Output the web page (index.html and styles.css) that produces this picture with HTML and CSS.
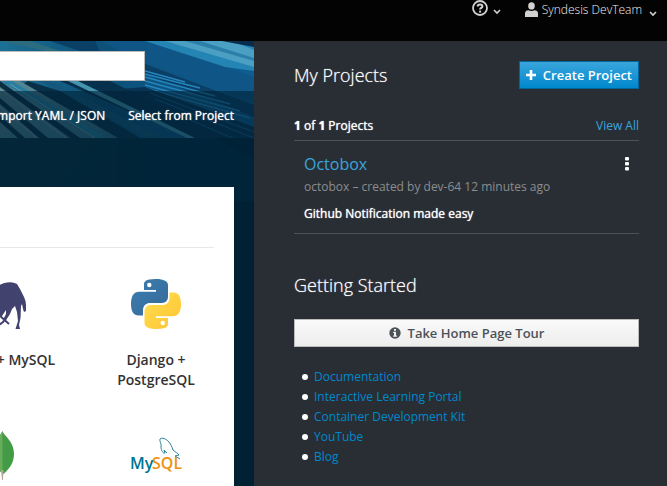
FILE: index.html
```html
<!DOCTYPE html>
<html lang="en">
<head>
<meta charset="utf-8">
<title>Catalog</title>
<link rel="stylesheet" href="styles.css">
</head>
<body>
<header class="topbar">
  <button class="menu help" type="button" aria-label="Help">
    <svg width="16" height="16" viewBox="0 0 16 16"><circle cx="8" cy="8" r="7" fill="none" stroke="currentColor" stroke-width="1.8"/><path d="M5.7 6.4C5.7 3.7 10.4 3.7 10.4 6.4C10.4 8 8.1 7.9 8.1 9.5" fill="none" stroke="currentColor" stroke-width="2"/><rect x="7.1" y="10.6" width="2" height="2" fill="currentColor"/></svg>
    <svg class="caret" width="8" height="8" viewBox="0 0 8 8"><path d="M1 3L4 6L7 3" fill="none" stroke="currentColor" stroke-width="1.6"/></svg>
  </button>
  <button class="menu user" type="button">
    <svg width="13" height="16" viewBox="0 0 13 16"><ellipse cx="6.500" cy="3.900" rx="3.300" ry="3.700" fill="currentColor"/><path d="M0 15V11.500Q0 8.600 3.400 8.200Q6.500 9.800 9.600 8.200Q13 8.600 13 11.500V15Z" fill="currentColor"/></svg>
    <span class="user-name">Syndesis DevTeam</span>
    <svg class="caret" width="8" height="8" viewBox="0 0 8 8"><path d="M1 3L4 6L7 3" fill="none" stroke="currentColor" stroke-width="1.6"/></svg>
  </button>
</header>
<div class="page">
  <main class="catalog">
    <svg class="backdrop" width="254" height="160" viewBox="0 0 254 160" preserveAspectRatio="none" aria-hidden="true">
      <defs>
        <linearGradient id="sky" x1="0" y1="0" x2="1" y2="0"><stop offset="0" stop-color="#1c7096"/><stop offset=".4" stop-color="#0d5078"/><stop offset="1" stop-color="#0e5d92"/></linearGradient>
        <linearGradient id="rail" x1="0" y1="0" x2="1" y2="1"><stop offset="0" stop-color="#5a8893"/><stop offset="1" stop-color="#256685"/></linearGradient>
      </defs>
      <rect width="254" height="160" fill="url(#sky)"/>
      <path d="M0 0H30L60 10H45Z" fill="#2c6c80"/>
      <path d="M50 0H95L100 10H80Z" fill="#0a3f66"/>
      <path d="M100 0H150L254 36V62L145 22Z" fill="#0f5585"/>
      <path d="M145 0H254V30L225 26Z" fill="#2484b4"/>
      <path d="M165 0H232L254 9V26Z" fill="#4a9fc2"/>
      <path d="M185 0H200L254 17V20Z" fill="#2c7fa9"/>
      <path d="M222 0H254V6Z" fill="#082c4c"/>
      <path d="M145 23L254 64V76L145 33Z" fill="#0b3f66"/>
      <g stroke="#2486bd" stroke-width="1.500"><path d="M145 30L185 41M145 33L200 47M145 36L215 55M145 40L230 63M145 44L240 70M145 47L250 77"/></g>
      <path d="M145 46L254 86V118L120 48Z" fill="#083354"/>
      <g stroke="#17608f"><path d="M150 52L254 91M155 58L254 97M150 62L254 106M140 62L240 112"/></g>
      <path d="M60 40H110L225 97L190 97Z" fill="#06304c"/>
      <path d="M78 40L195 97H187L68 40Z" fill="#4494ae"/>
      <path d="M50 40L165 97H145L40 40Z" fill="#15587c"/>
      <path d="M28 40L60 50L140 97H110L20 45Z" fill="#093047"/>
      <path d="M0 40H20L118 97V160H0Z" fill="url(#rail)"/>
      <path d="M0 40L12 40L107 97H94Z" fill="#267fa3"/>
      <g fill="#092e42"><path d="M0 40L80 97H70L0 46Z"/><path d="M0 57L48 97H39L0 63Z"/><path d="M0 75L25 97H18L0 81Z"/></g>
      <g stroke="#79939a"><path d="M0 48L66 97M0 66L37 97M10 43L95 97"/></g>
    </svg>
    <section class="search">
      <input class="search-box" type="text" aria-label="Search catalog">
    </section>
    <nav class="actions">
      <a href="#">Import YAML / JSON</a>
      <a href="#">Select from Project</a>
    </nav>
    <section class="shade">
      <div class="card">
        <div class="card-head"></div>
        <div class="tiles">
          <a class="tile" href="#">
            <svg class="logo" width="52" height="50" viewBox="0 0 52 50"><path fill="#42426f" d="M0 14L5 17L10 19L16 15L22 8Q28 4 33 3.500Q39 2.500 43 5L46 10L50 18Q52 22 52 26V32L50 33L49 30L48 25L47 27L46.500 39L45 46L46 50H41.500L44 42L43 33L41 27L38 30L36 35L34 38L31 43L29 41L32 35V31L28 37L26 38L23 34L22 48H18L20 33Q11 32 7 22L0 18Z"/><path d="M25 36L35 45M34 35L29 43L25 46" fill="none" stroke="#42426f" stroke-width="2"/></svg>
            <span>Dancer + MySQL</span>
          </a>
          <a class="tile" href="#">
            <svg class="logo" width="50" height="50" viewBox="0 0 50 50"><defs><linearGradient id="pyb" x1="0" y1="0" x2="1" y2="1"><stop offset="0" stop-color="#3b7db0"/><stop offset="1" stop-color="#366a98"/></linearGradient><linearGradient id="pyy" x1="0" y1="0" x2="1" y2="1"><stop offset="0" stop-color="#ffe052"/><stop offset="1" stop-color="#ffc331"/></linearGradient></defs><path fill="url(#pyb)" d="M24.800 0C14 0 13 3 13 5.500V11H25V12.800H8C3 12.800 0 17 0 25C0 33 3 36.500 7.500 36.500H12V31C12 26.500 15.500 24 19 24H31C34.500 24 37 21 37 18V6C37 2.500 33 0 24.800 0ZM18.300 3.800A2.200 2.200 0 1 1 18.300 8.200A2.200 2.200 0 0 1 18.300 3.800Z"/><path fill="url(#pyy)" d="M25.200 50C36 50 37 47 37 44.500V39H25V37.200H42C47 37.200 50 33 50 25C50 17 47 13.500 42.500 13.500H38.500V19C38.500 23.500 35 26 31.500 26H19.500C16 26 13.500 29 13.500 32V44C13.500 47.500 17 50 25.200 50ZM31.700 46.200A2.200 2.200 0 1 1 31.700 41.800A2.200 2.200 0 0 1 31.700 46.200Z"/></svg>
            <span>Django + PostgreSQL</span>
          </a>
          <a class="tile" href="#" aria-label="MongoDB">
            <svg class="logo" width="50" height="50" viewBox="0 0 50 50"><path d="M27.500 1C29 6 39 11 39 24C39 34 33 40 28.500 44C20 38 15 32 16 22C17 12 25 7 27.500 1Z" fill="#449b45"/><path d="M27.500 1C25 7 17 12 16 22C15 32 20 38 27.500 43Z" fill="#67ad5b"/><path d="M26 40H28.500L28 50H27Z" fill="#b5aa96"/></svg>
          </a>
          <a class="tile" href="#">
            <svg class="logo" width="52" height="50" viewBox="0 0 52 50" aria-label="MySQL"><g font-family="Open Sans, sans-serif" font-size="16" font-weight="600"><text x="0" y="39" fill="#00758f">My</text><text x="22" y="39" fill="#f29111">SQL</text></g><path d="M30 9C32 7 36 9 38 11C41 14 42 17 43 20C45 22 48 23 49 25L45 26L50 29M30 9C29 11 32 14 31 17C31 20 33 24 35 23L34 20L37 23" fill="none" stroke="#2d8599"/></svg>
          </a>
        </div>
      </div>
    </section>
  </main>
  <aside class="side">
    <div class="row">
      <h2>My Projects</h2>
      <button class="create" type="button"><svg width="10" height="10" viewBox="0 0 10 10"><path d="M5 0V10M0 5H10" stroke="currentColor" stroke-width="2.600"/></svg>Create Project</button>
    </div>
    <div class="row summary">
      <span class="count"><b>1</b> of <b>1</b> Projects</span>
      <a class="view-all" href="#">View All</a>
    </div>
    <article class="project">
      <div class="row">
        <h3><a href="#">Octobox</a></h3>
        <button class="kebab" type="button" aria-label="Project actions"><svg width="4" height="14" viewBox="0 0 4 14" fill="currentColor"><rect width="4" height="3.600" rx="1"/><rect y="5" width="4" height="3.600" rx="1"/><rect y="10" width="4" height="3.600" rx="1"/></svg></button>
      </div>
      <p class="meta">octobox – created by dev-64 12 minutes ago</p>
      <p class="about">Github Notification made easy</p>
    </article>
    <h2 class="started">Getting Started</h2>
    <button class="tour" type="button"><svg width="12" height="12" viewBox="0 0 12 12"><circle cx="6" cy="6" r="5.700" fill="currentColor"/><path d="M5 2H7V3.700H5ZM4.200 4.800H7V8.500H7.900V9.800H4.200V8.500H5V6H4.200Z" fill="#f4f4f4"/></svg>Take Home Page Tour</button>
    <ul class="links">
      <li><a href="#">Documentation</a></li>
      <li><a href="#">Interactive Learning Portal</a></li>
      <li><a href="#">Container Development Kit</a></li>
      <li><a href="#">YouTube</a></li>
      <li><a href="#">Blog</a></li>
    </ul>
  </aside>
</div>
</body>
</html>
```
FILE: styles.css
```css
* { box-sizing: border-box; }
html, body { height: 100%; }
body {
  margin: 0;
  display: flex;
  flex-direction: column;
  overflow: hidden;
  background: #292e34;
  color: #fff;
  font: 12px/20px "Open Sans", sans-serif;
}
a { color: inherit; text-decoration: none; }
button { font: inherit; color: inherit; cursor: pointer; }
svg { flex: none; }
h2, h3, p, ul { margin: 0; font-weight: 400; }

.topbar {
  flex: none;
  display: flex;
  justify-content: flex-end;
  align-items: flex-start;
  gap: 24px;
  padding: 0 10px;
  height: 41px;
  background: #030303;
}
.menu {
  display: flex;
  align-items: center;
  padding: 0;
  border: 0;
  background: none;
  color: #d1d1d1;
}
.menu .caret { margin-top: 6px; }
.help { gap: 5px; }
.user-name { margin: 0 7px 0 4px; font-weight: 300; color: #f0f0f0; }

.page {
  flex: 1;
  display: grid;
  grid-template-columns: minmax(0, 1fr) 413px;
}
.catalog {
  position: relative;
  display: flex;
  flex-direction: column;
  overflow: hidden;
  background: #002235;
}
.backdrop { position: absolute; top: 0; left: 0; width: 100%; }
.search, .actions, .shade { position: relative; }
.search {
  display: flex;
  justify-content: flex-end;
  padding: 10px 109px 10px 0;
}
.search-box {
  flex: none;
  width: 400px;
  height: 30px;
  border: 1px solid #bbb;
  background: #fff;
  font: inherit;
}
.actions {
  display: flex;
  justify-content: flex-end;
  gap: 23px;
  padding: 15px 20px 12px;
  background: rgba(0, 34, 53, .6);
  white-space: nowrap;
}
.actions, .count, .about {
  font-weight: 500;
  text-shadow: 0 0 1px #fff;
}
.shade {
  flex: 1;
  display: flex;
  justify-content: flex-end;
  padding: 49px 20px 0 0;
  background: rgba(0, 34, 53, .95);
}
.card {
  flex: none;
  width: 312px;
  background: #fff;
  color: #333;
}
.card-head {
  height: 61px;
  margin: 0 20px;
  border-bottom: 1px solid #e8e8e8;
}
.tiles {
  display: grid;
  grid-template-columns: 156px 156px;
  row-gap: 40px;
  padding-top: 31px;
}
.tile {
  display: flex;
  flex-direction: column;
  align-items: center;
  gap: 21px;
  padding: 0 20px;
  font-size: 14px;
  font-weight: 600;
  text-align: center;
}

.side { padding: 20px 28px 0 40px; }
.row { display: flex; align-items: center; justify-content: space-between; }
h2 {
  font-size: 18px;
  font-weight: 300;
  line-height: 26px;
  text-shadow: 0 0 1px rgba(255, 255, 255, .7);
}
.create {
  display: flex;
  align-items: center;
  gap: 7px;
  height: 28px;
  padding: 0 6px;
  border: 1px solid #00659c;
  background: linear-gradient(#39a5dc, #0088ce);
  font-size: 13px;
  font-weight: 600;
}
.summary { margin-top: 27px; padding-bottom: 4px; border-bottom: 1px solid #4d5258; }
.view-all, h3 { color: #39a5dc; }
.project { padding: 10px 10px 9px; border-bottom: 1px solid #4d5258; }
h3 { font-size: 16px; line-height: 26px; }
.kebab { display: flex; padding: 0; border: 0; background: none; }
.meta { color: #8b8d8f; }
.about { margin-top: 7px; }
.started { margin-top: 38px; }
.tour {
  display: flex;
  justify-content: center;
  align-items: center;
  gap: 7px;
  width: 100%;
  height: 28px;
  margin-top: 21px;
  border: 1px solid #bbb;
  background: linear-gradient(#fafafa, #ededed);
  color: #4d5258;
  font-size: 13px;
  font-weight: 600;
}
.links { margin-top: 20px; padding-left: 8px; list-style: none; }
.links li { display: flex; align-items: center; gap: 6px; }
.links li::before {
  content: "";
  width: 6px;
  height: 6px;
  border-radius: 50%;
  background: #fff;
}
.links a { color: #0088ce; }
```
